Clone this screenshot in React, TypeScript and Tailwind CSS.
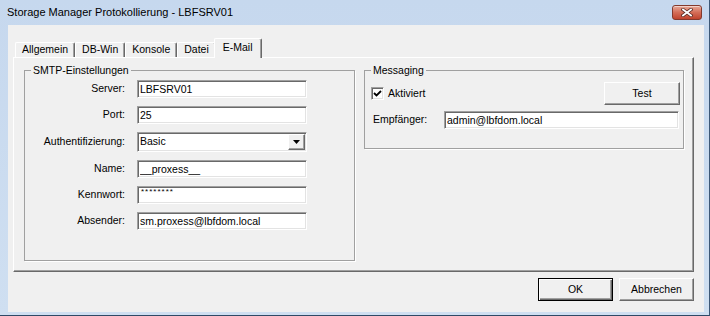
import React from 'react';

const sunken =
  'border border-t-[#a0a0a0] border-l-[#a0a0a0] border-r-white border-b-white shadow-[inset_1px_1px_0_#696969,inset_-1px_-1px_0_#e3e3e3]';
const raised =
  'border border-t-white border-l-white border-r-[#696969] border-b-[#696969] shadow-[inset_-1px_-1px_0_#a0a0a0] bg-[#f0f0f0]';

const tabs = ['Allgemein', 'DB-Win', 'Konsole', 'Datei', 'E-Mail'];

function TextField({ value, className = '' }: { value: string; className?: string }) {
  return (
    <input
      readOnly
      value={value}
      className={`h-[18px] bg-white px-[2px] text-[10.5px] text-black outline-none ${sunken} ${className}`}
    />
  );
}

function Button({ label, primary = false, className = '' }: { label: string; primary?: boolean; className?: string }) {
  return (
    <button
      className={`flex h-[23px] items-center justify-center bg-[#f0f0f0] text-[10.5px] text-black ${
        primary
          ? 'border border-black shadow-[inset_1px_1px_0_#fff,inset_-1px_-1px_0_#696969,inset_-2px_-2px_0_#a0a0a0]'
          : raised
      } ${className}`}
    >
      {label}
    </button>
  );
}

function Row({ label, children }: { label: string; children: React.ReactNode }) {
  return (
    <div className="flex items-center">
      <span className="w-[100px] text-right">{label}</span>
      <div className="ml-[12px] w-[170px]">{children}</div>
    </div>
  );
}

export default function App() {
  return (
    <div className="flex h-[316px] w-[710px] flex-col overflow-hidden border-r border-b border-r-[#3d5877] border-b-[#2f4a66] bg-gradient-to-b from-[#c6d8ee] to-[#cfdff1] font-['Liberation_Sans',Arial,sans-serif] text-[10.5px] text-black">
      {/* Title bar */}
      <div className="flex h-[25px] shrink-0 items-center justify-between pl-[7px] pr-[7px]">
        <span className="text-[11px]">Storage Manager Protokollierung - LBFSRV01</span>
        <div className="flex h-[15px] w-[30px] items-center justify-center rounded-[3px] border border-[#83392c] bg-gradient-to-b from-[#e7a898] via-[#d46d57] to-[#c0432d] shadow-[inset_0_1px_0_rgba(255,255,255,0.5)]">
          <svg width="12" height="9" viewBox="0 0 12 9">
            <path d="M2 1.5 L10 7.5 M10 1.5 L2 7.5" stroke="#5a2a22" strokeWidth="3.4" strokeLinecap="square" />
            <path d="M2 1.5 L10 7.5 M10 1.5 L2 7.5" stroke="#fff" strokeWidth="1.8" strokeLinecap="square" />
          </svg>
        </div>
      </div>

      {/* Client area */}
      <div className="mb-[3px] ml-[8px] mr-[5px] flex flex-1 flex-col bg-[#f0f0f0] pl-[5px] pr-[10px] pt-[13px]">
        {/* Tabs */}
        <div className="flex h-[19px] items-end pl-[2px]">
          {tabs.map((t) =>
            t === 'E-Mail' ? (
              <div
                key={t}
                className="relative z-10 -mx-[2px] -mb-px h-[20px] rounded-t-[2px] border-t border-l border-r border-t-white border-l-white border-r-[#696969] bg-[#f0f0f0] px-[8px] pt-[2px] leading-[13px] shadow-[inset_-1px_0_0_#a0a0a0]"
              >
                {t}
              </div>
            ) : (
              <div
                key={t}
                className="h-[15px] rounded-t-[2px] border-t border-l border-r border-t-white border-l-white border-r-[#696969] px-[6px] leading-[13px] shadow-[inset_-1px_0_0_#a0a0a0]"
              >
                {t}
              </div>
            ),
          )}
        </div>

        {/* Tab panel */}
        <div className={`flex h-[215px] items-start gap-[9px] pl-[10px] ${raised}`}>
          {/* SMTP */}
          <fieldset className="mt-[6px] w-[331px] border border-[#a0a0a0] pb-[30px] pt-[3px] shadow-[1px_1px_0_#fff]">
            <legend className="ml-[6px] px-[2px] leading-[13px]">SMTP-Einstellungen</legend>
            <div className="flex flex-col gap-[8px]">
              <Row label="Server:">
                <TextField value="LBFSRV01" className="w-full" />
              </Row>
              <Row label="Port:">
                <TextField value="25" className="w-full" />
              </Row>
              <Row label="Authentifizierung:">
                <div className={`flex h-[20px] w-full items-center bg-white pl-[2px] ${sunken}`}>
                  <span className="flex-1">Basic</span>
                  <div className={`mr-px flex h-[16px] w-[17px] items-center justify-center ${raised}`}>
                    <svg width="7" height="4" viewBox="0 0 7 4">
                      <path d="M0 0 H7 L3.5 4 Z" fill="#000" />
                    </svg>
                  </div>
                </div>
              </Row>
              <Row label="Name:">
                <TextField value="__proxess__" className="w-full" />
              </Row>
              <Row label="Kennwort:">
                <div className={`flex h-[18px] w-full items-start bg-white pl-[3px] pt-[1px] ${sunken}`}>
                  <span className="text-[8px] leading-[8px] tracking-[1px]">********</span>
                </div>
              </Row>
              <Row label="Absender:">
                <TextField value="sm.proxess@lbfdom.local" className="w-full" />
              </Row>
            </div>
          </fieldset>

          {/* Messaging */}
          <fieldset className="mt-[6px] w-[320px] border border-[#a0a0a0] pb-[19px] pl-[6px] pr-[3px] pt-[5px] shadow-[1px_1px_0_#fff]">
            <legend className="ml-0 px-[2px] leading-[13px]">Messaging</legend>
            <div className="flex h-[23px] items-center justify-between">
              <label className="flex items-center gap-[4px]">
                <span className={`flex h-[13px] w-[13px] items-center justify-center bg-white ${sunken}`}>
                  <svg width="9" height="9" viewBox="0 0 9 9">
                    <path d="M1 4 L3.5 6.5 L8 2" stroke="#000" strokeWidth="1.8" fill="none" />
                  </svg>
                </span>
                Aktiviert
              </label>
              <Button label="Test" className="w-[76px]" />
            </div>
            <div className="mt-[6px] flex items-center pl-[2px]">
              <span className="w-[71px]">Empfänger:</span>
              <TextField value="admin@lbfdom.local" className="w-[235px]" />
            </div>
          </fieldset>
        </div>

        {/* Dialog buttons */}
        <div className="mt-[6px] flex justify-end gap-[6px]">
          <Button label="OK" primary className="w-[75px]" />
          <Button label="Abbrechen" className="w-[75px]" />
        </div>
      </div>
    </div>
  );
}
